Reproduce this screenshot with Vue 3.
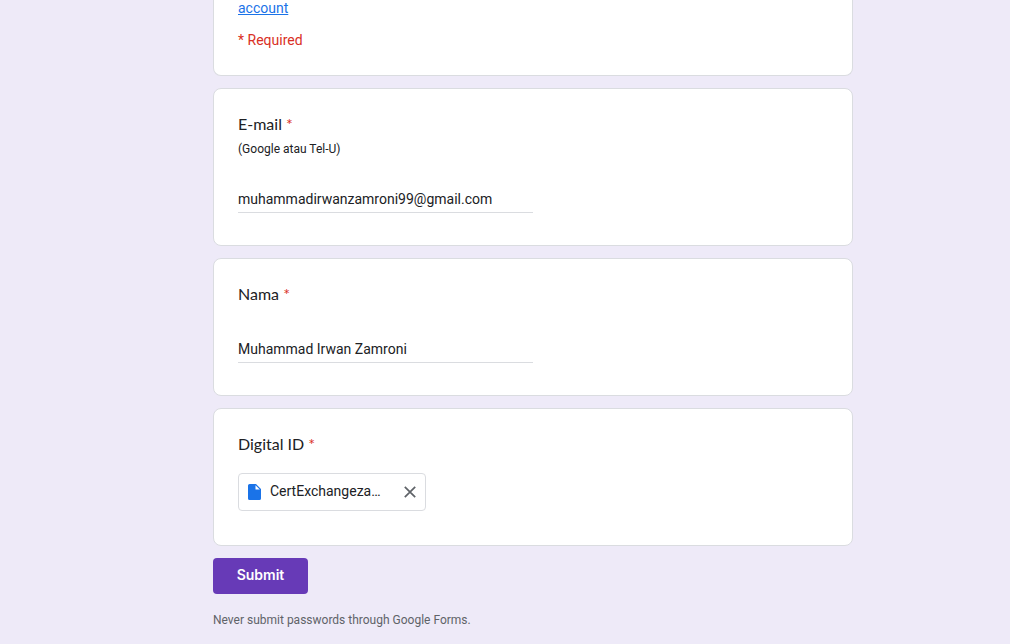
<script setup>
import { ref } from 'vue'

const email = ref('muhammadirwanzamroni99@gmail.com')
const name = ref('Muhammad Irwan Zamroni')
const file = ref('CertExchangeza…')
</script>

<template>
  <main class="page">
    <form class="form" @submit.prevent>
      <header class="card intro">
        <a class="switch" href="#">account</a>
        <p class="required">* Required</p>
      </header>

      <section class="card">
        <label class="title" for="email">E-mail <span class="star">*</span></label>
        <p class="hint">(Google atau Tel-U)</p>
        <input id="email" v-model="email" class="field" type="email" required />
      </section>

      <section class="card">
        <label class="title" for="name">Nama <span class="star">*</span></label>
        <input id="name" v-model="name" class="field" type="text" required />
      </section>

      <section class="card">
        <h2 class="title">Digital ID <span class="star">*</span></h2>
        <div v-if="file" class="chip">
          <svg class="doc" viewBox="0 0 13 16" aria-hidden="true">
            <path fill="#1a73e8" d="M1.6 0H8l5 5v9.400A1.600 1.600 0 0 1 11.400 16H1.600A1.600 1.600 0 0 1 0 14.400V1.600A1.600 1.600 0 0 1 1.600 0Z" />
            <path fill="#fff" d="M7.500 1.200V5.500H11.800Z" />
          </svg>
          <span class="filename">{{ file }}</span>
          <button class="remove" type="button" aria-label="Remove file" @click="file = ''">
            <svg viewBox="0 0 12 12" aria-hidden="true">
              <path d="M.8.8 11.200 11.200M11.200.8.8 11.200" fill="none" stroke="#5f6368" stroke-width="1.700" />
            </svg>
          </button>
        </div>
      </section>

      <button class="submit" type="submit">Submit</button>
      <p class="note">Never submit passwords through Google Forms.</p>
    </form>
  </main>
</template>

<style>
body {
  background: #eeeaf8;
}
</style>

<style scoped>
.page {
  box-sizing: border-box;
  padding-left: 56px;
  font-family: Roboto, "Liberation Sans", sans-serif;
  font-size: 14px;
  line-height: 20px;
  color: #202124;
}

.form {
  display: flex;
  flex-direction: column;
  gap: 12px;
  max-width: 640px;
  margin: 0 auto;
}

.card {
  display: flex;
  flex-direction: column;
  align-items: flex-start;
  padding: 24px 24px 32px;
  background: #fff;
  border: 1px solid #dadce0;
  border-radius: 8px;
}

.intro {
  gap: 14px;
  padding-top: 0;
  padding-bottom: 25px;
  border-top: 0;
  border-top-left-radius: 0;
  border-top-right-radius: 0;
}

.switch {
  line-height: 16px;
  color: #1a73e8;
}

.required {
  margin: 0;
  color: #d93025;
}

.title {
  margin: 0;
  padding-bottom: 2px;
  font-family: Lato, Roboto, sans-serif;
  font-size: 16px;
  font-weight: 400;
  line-height: 22px;
}

.star {
  color: #d93025;
}

.hint {
  margin: 4px 0 0;
  font-size: 12px;
  line-height: 16px;
}

.field {
  box-sizing: border-box;
  width: 50%;
  height: 26px;
  margin-top: 30px;
  padding: 0 0 2px;
  border: 0;
  border-bottom: 1px solid #dadce0;
  outline: 0;
  background: transparent;
  font: inherit;
  color: inherit;
}

.chip {
  box-sizing: border-box;
  display: flex;
  align-items: center;
  width: 188px;
  height: 38px;
  margin: 16px 0 2px;
  padding: 0 8px 0 9px;
  border: 1px solid #dadce0;
  border-radius: 4px;
}

.doc {
  flex: none;
  width: 13px;
  height: 16px;
}

.filename {
  flex: 1;
  margin-left: 9px;
  padding-bottom: 2px;
  overflow: hidden;
  white-space: nowrap;
}

.remove {
  display: flex;
  padding: 1px;
  border: 0;
  background: none;
  cursor: pointer;
}

.remove svg {
  width: 12px;
  height: 12px;
}

.submit {
  align-self: flex-start;
  min-width: 95px;
  height: 36px;
  padding: 0 22px 2px;
  border: 0;
  border-radius: 4px;
  background: #673ab7;
  font-family: Inter, Roboto, sans-serif;
  font-size: 14px;
  font-weight: 600;
  line-height: 20px;
  color: #fff;
  cursor: pointer;
}

.note {
  margin: 6px 0 12px;
  font-size: 12px;
  line-height: 16px;
  color: #5f6368;
}
</style>
